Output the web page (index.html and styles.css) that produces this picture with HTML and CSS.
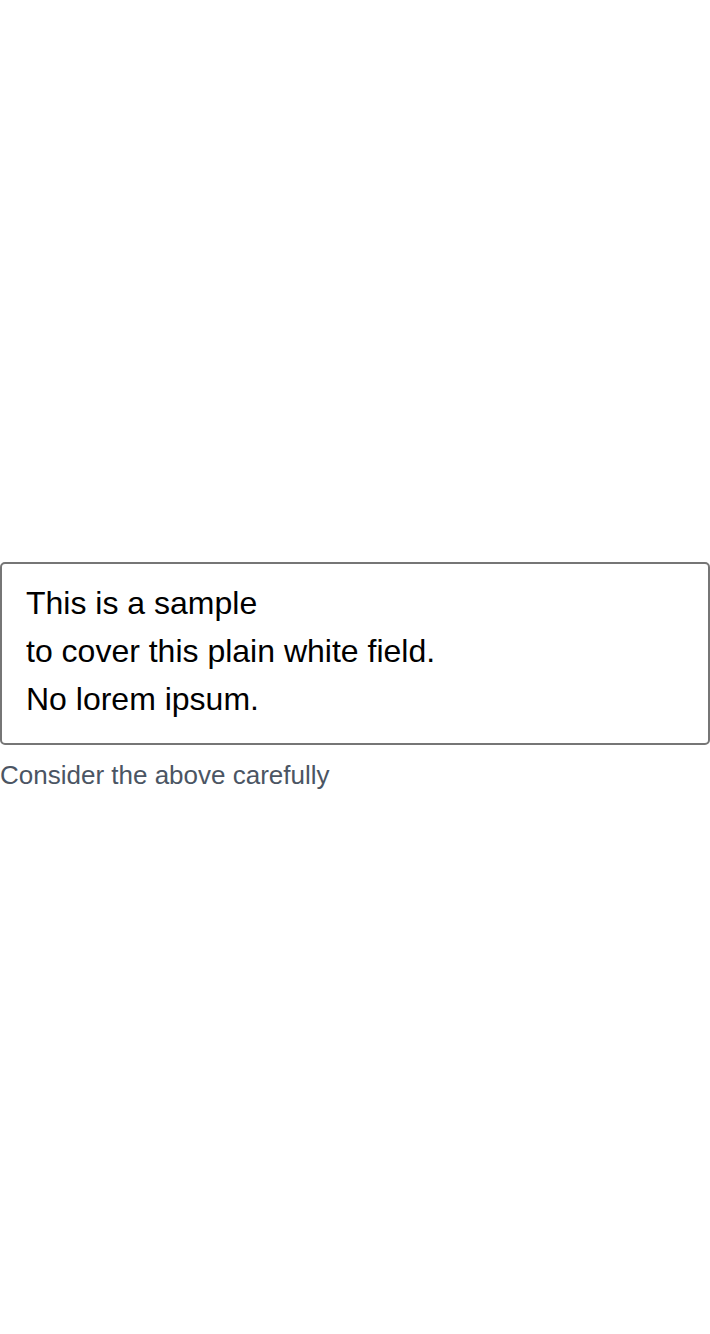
FILE: index.html
```html
<!DOCTYPE html>
<html>
<head>
<meta charset="utf-8">
<link rel="stylesheet" href="styles.css">
</head>
<body>
<main class="page">
  <div class="field">
    <div class="box">
      <div>This is a sample</div>
      <div>to cover this plain white field.</div>
      <div>No lorem ipsum.</div>
    </div>
    <p class="hint">Consider the above carefully</p>
  </div>
</main>
</body>
</html>
```

FILE: styles.css
```css
html, body {
  margin: 0;
  padding: 0;
  background: #fff;
}
body {
  font-family: "Liberation Sans", Arial, sans-serif;
}
.page {
  min-height: 1334px;
  box-sizing: border-box;
  padding-top: 562px;
}
.box {
  border: 2px solid #767676;
  border-radius: 5px;
  padding: 15px 24px 20px;
  font-size: 32px;
  line-height: 48px;
  color: #000;
}
.hint {
  margin: 15px 0 0;
  font-size: 26px;
  line-height: 30px;
  color: #4b5563;
}
```
